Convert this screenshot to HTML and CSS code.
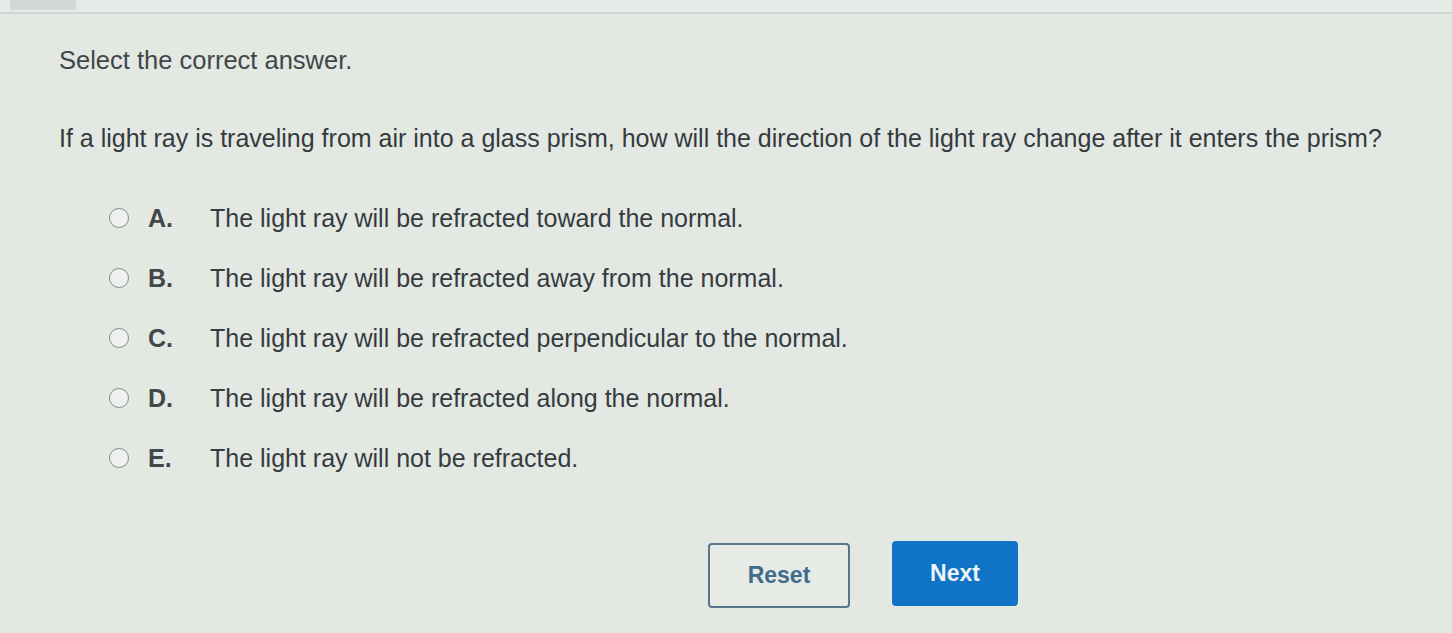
FILE: index.html
```html
<!DOCTYPE html>
<html lang="en">
<head>
    <meta charset="UTF-8">
    <title>Select the correct answer</title>
    <link rel="stylesheet" href="styles.css">
</head>
<body>

<div class="top-bar">
    <div class="tab"></div>
</div>

<div class="container">
    <p class="instruction">Select the correct answer.</p>

    <p class="question">If a light ray is traveling from air into a glass prism, how will the direction of the light ray change after it enters the prism?</p>

    <div class="options">
        <label class="option"><span class="radio"></span><span class="letter">A.</span><span class="text">The light ray will be refracted toward the normal.</span></label>
        <label class="option"><span class="radio"></span><span class="letter">B.</span><span class="text">The light ray will be refracted away from the normal.</span></label>
        <label class="option"><span class="radio"></span><span class="letter">C.</span><span class="text">The light ray will be refracted perpendicular to the normal.</span></label>
        <label class="option"><span class="radio"></span><span class="letter">D.</span><span class="text">The light ray will be refracted along the normal.</span></label>
        <label class="option"><span class="radio"></span><span class="letter">E.</span><span class="text">The light ray will not be refracted.</span></label>
    </div>

    <div class="buttons">
        <button class="button reset">Reset</button>
        <button class="button next">Next</button>
    </div>
</div>

</body>
</html>
```

FILE: styles.css
```css
* {
    margin: 0;
    padding: 0;
    box-sizing: border-box;
    font-family: "Liberation Sans", Arial, sans-serif;
}

body {
    background: #e3e8e2;
    color: #363b40;
    height: 633px;
    overflow: hidden;
}

.top-bar {
    height: 14px;
    border-bottom: 2px solid #cfd6d2;
    background: #e6ebe7;
}

.tab {
    width: 66px;
    height: 10px;
    margin-left: 10px;
    background: #d2d8d6;
}

.container {
    padding: 32px 0 0 59px;
}

.instruction {
    font-size: 25.5px;
    line-height: 28px;
    color: #41464a;
}

.question {
    font-size: 25px;
    line-height: 28px;
    margin-top: 50px;
    color: #353a3f;
}

.options {
    display: flex;
    flex-direction: column;
    gap: 32px;
    margin-top: 52px;
    padding-left: 50px;
}

.option {
    display: flex;
    align-items: center;
    font-size: 25px;
    line-height: 28px;
}

.radio {
    width: 20px;
    height: 20px;
    border: 1.5px solid #858a8c;
    border-radius: 50%;
    background: #eef1ee;
    margin-right: 19px;
}

.letter {
    width: 62px;
    font-weight: bold;
    color: #42474b;
}

.buttons {
    display: flex;
    align-items: flex-start;
    gap: 42px;
    margin-top: 69px;
    padding-left: 649px;
}

.button {
    font-size: 23px;
    font-weight: bold;
    border-radius: 4px;
    height: 65px;
}

.reset {
    width: 142px;
    background: #e6ebe6;
    border: 2px solid #58758c;
    color: #3f6b8e;
    margin-top: 2px;
}

.next {
    width: 126px;
    background: #0f73c6;
    border: none;
    color: #eef4f8;
}
```
